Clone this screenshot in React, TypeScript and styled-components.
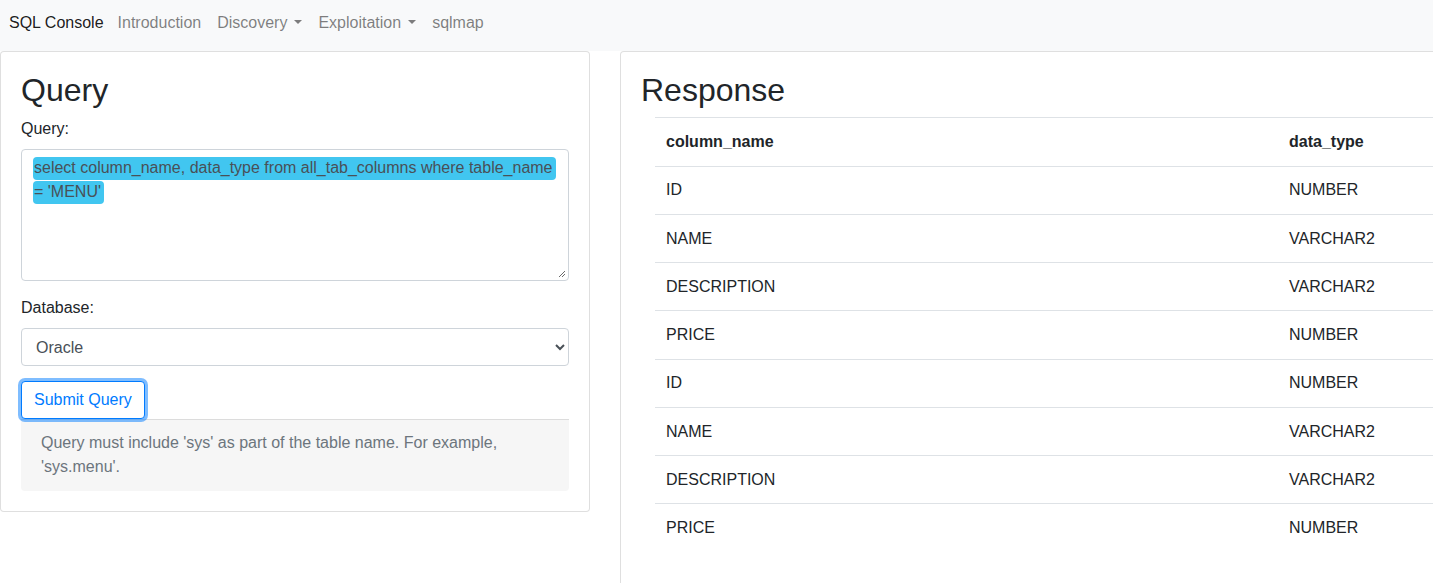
import React from "react";
import styled, { createGlobalStyle } from "styled-components";

const GlobalStyle = createGlobalStyle`
  html, body { margin: 0; padding: 0; background: #fff; overflow: hidden; }
  body {
    font-family: "Liberation Sans", Arial, sans-serif;
    font-size: 16px;
    line-height: 24px;
    color: #212529;
  }
  * { box-sizing: border-box; }
`;

const Navbar = styled.nav`
  display: flex;
  align-items: flex-start;
  height: 51px;
  padding: 11px 0 0 9px;
  background: #f8f9fa;
`;

const Brand = styled.span`
  color: rgba(0, 0, 0, 0.9);
  margin-right: 6px;
`;

const NavLink = styled.span<{ $dropdown?: boolean }>`
  color: rgba(0, 0, 0, 0.5);
  padding: 0 8px;
  ${(p) =>
    p.$dropdown &&
    `
    &::after {
      content: "";
      display: inline-block;
      margin-left: 7px;
      vertical-align: 0.255em;
      border-top: 0.3em solid;
      border-right: 0.3em solid transparent;
      border-left: 0.3em solid transparent;
      border-bottom: 0;
    }
  `}
`;

const Main = styled.main`
  display: flex;
  align-items: flex-start;
  gap: 30px;
  width: 1700px;
`;

const Card = styled.section<{ $width: number; $minHeight?: number }>`
  flex: 0 0 auto;
  width: ${(p) => p.$width}px;
  min-height: ${(p) => (p.$minHeight ? `${p.$minHeight}px` : "auto")};
  border: 1px solid rgba(0, 0, 0, 0.125);
  border-radius: 4px;
  padding: 19px 20px 20px;
  background: #fff;
`;

const Heading = styled.h2`
  margin: 0 0 8px;
  font-size: 32px;
  font-weight: 500;
  line-height: 1.2;
`;

const FormGroup = styled.div<{ $mb?: number }>`
  margin-bottom: ${(p) => (p.$mb !== undefined ? p.$mb : 16)}px;
`;

const Label = styled.label`
  display: block;
  margin-bottom: 8px;
`;

const TextArea = styled.div`
  position: relative;
  height: 132px;
  padding: 6px 12px 6px 11px;
  border: 1px solid #ced4da;
  border-radius: 4px;
  color: #495057;
`;

const Highlight = styled.span`
  background: #41c6f0;
  border-radius: 4px;
  padding: 2px 3px 4px 1px;
  box-decoration-break: clone;
  -webkit-box-decoration-break: clone;
`;

const Grip = styled.svg`
  position: absolute;
  right: 2px;
  bottom: 2px;
`;

const Select = styled.select`
  display: block;
  width: 100%;
  height: 38px;
  padding: 6px 12px 6px 10px;
  font-family: inherit;
  font-size: 16px;
  line-height: 24px;
  color: #495057;
  background: #fff;
  border: 1px solid #ced4da;
  border-radius: 4px;
`;

const Button = styled.button`
  display: block;
  height: 38px;
  margin-top: -1px;
  padding: 6px 12px;
  font-family: inherit;
  font-size: 16px;
  line-height: 24px;
  color: #007bff;
  background: #fff;
  border: 1px solid #007bff;
  border-radius: 4px;
  box-shadow: 0 0 0 3px rgba(0, 123, 255, 0.5);
  position: relative;
  z-index: 1;
`;

const Help = styled.div`
  padding: 11px 20px 12px;
  background: #f6f6f6;
  border-top: 1px solid #dcdcdc;
  border-radius: 0 0 4px 4px;
  color: #6c757d;
`;

const Table = styled.table`
  margin-left: 14px;
  width: 880px;
  border-collapse: collapse;
`;

const Cell = styled.td<{ $head?: boolean; $width?: number }>`
  padding: 11.625px 11px;
  border-top: 1px solid #dee2e6;
  text-align: left;
  font-weight: ${(p) => (p.$head ? 700 : 400)};
  width: ${(p) => (p.$width ? `${p.$width}px` : "auto")};
  vertical-align: top;
`;

const rows: [string, string][] = [
  ["ID", "NUMBER"],
  ["NAME", "VARCHAR2"],
  ["DESCRIPTION", "VARCHAR2"],
  ["PRICE", "NUMBER"],
  ["ID", "NUMBER"],
  ["NAME", "VARCHAR2"],
  ["DESCRIPTION", "VARCHAR2"],
  ["PRICE", "NUMBER"],
];

export default function App() {
  return (
    <>
      <GlobalStyle />
      <Navbar>
        <Brand>SQL Console</Brand>
        <NavLink>Introduction</NavLink>
        <NavLink $dropdown>Discovery</NavLink>
        <NavLink $dropdown>Exploitation</NavLink>
        <NavLink>sqlmap</NavLink>
      </Navbar>
      <Main>
        <Card $width={590}>
          <Heading>Query</Heading>
          <FormGroup $mb={15}>
            <Label>Query:</Label>
            <TextArea>
              <Highlight>
                select column_name, data_type from all_tab_columns where table_name = 'MENU'
              </Highlight>
              <Grip width="8" height="8" viewBox="0 0 8 8">
                <path d="M1 7 L7 1 M4 7 L7 4" stroke="#6b6b6b" strokeWidth="1" fill="none" />
              </Grip>
            </TextArea>
          </FormGroup>
          <FormGroup>
            <Label>Database:</Label>
            <Select defaultValue="oracle">
              <option value="oracle">Oracle</option>
            </Select>
          </FormGroup>
          <Button>Submit Query</Button>
          <Help>
            Query must include 'sys' as part of the table name. For example, 'sys.menu'.
          </Help>
        </Card>
        <Card $width={1000} $minHeight={560}>
          <Heading>Response</Heading>
          <Table>
            <thead>
              <tr>
                <Cell as="th" $head $width={623}>
                  column_name
                </Cell>
                <Cell as="th" $head>
                  data_type
                </Cell>
              </tr>
            </thead>
            <tbody>
              {rows.map(([name, type], i) => (
                <tr key={i}>
                  <Cell>{name}</Cell>
                  <Cell>{type}</Cell>
                </tr>
              ))}
            </tbody>
          </Table>
        </Card>
      </Main>
    </>
  );
}
